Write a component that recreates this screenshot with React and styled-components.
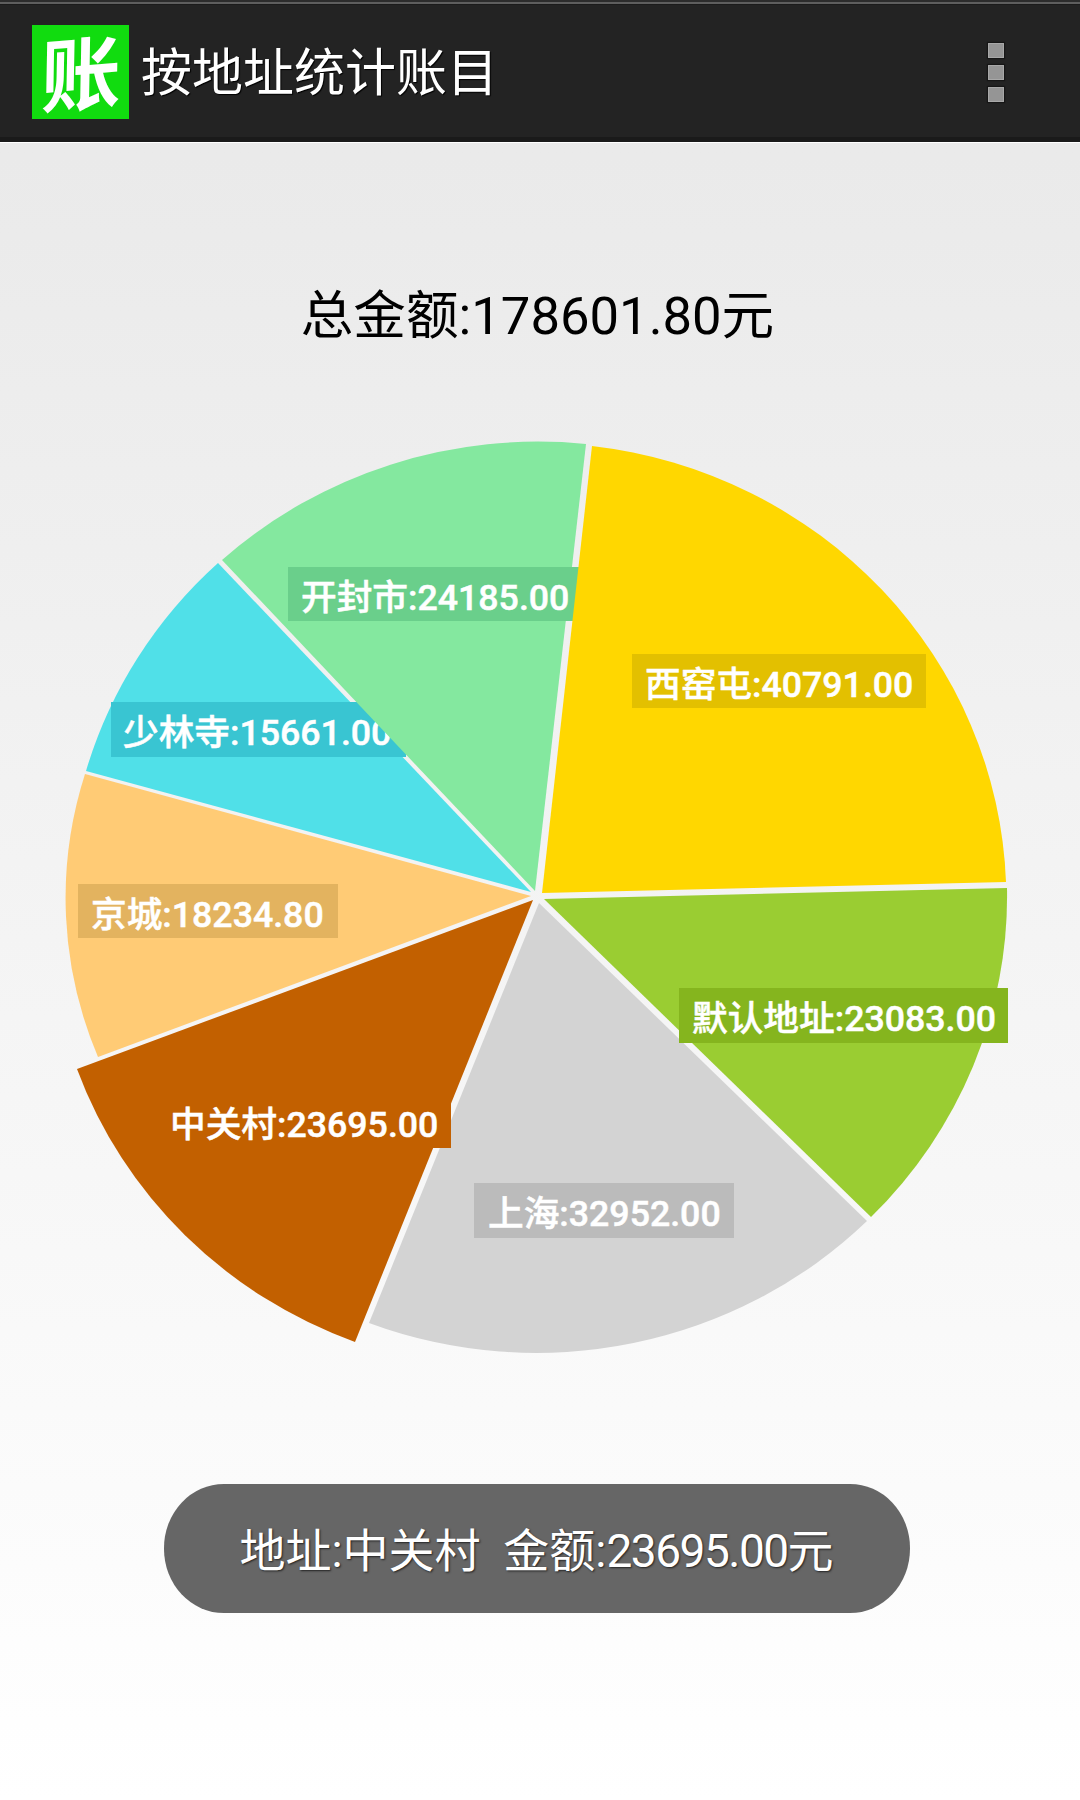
import React from "react";
import styled, { createGlobalStyle } from "styled-components";

const GlobalStyle = createGlobalStyle`
  html, body { margin: 0; padding: 0; }
  body { font-family: Roboto, "Noto Sans CJK SC", sans-serif; background: #fff; }
`;

const Page = styled.div`
  width: 1080px;
  height: 1800px;
  overflow: hidden;
  display: flex;
  flex-direction: column;
  background: linear-gradient(#e8e8e8, #ffffff);
`;

const ActionBar = styled.header`
  height: 142px;
  flex: none;
  box-sizing: content-box;
  display: flex;
  align-items: center;
  padding: 0 76px 0 32px;
  border-bottom: 1px solid #fff;
  background: linear-gradient(
    #2c2c2c 0 2px,
    #5e5e5e 2px 4px,
    #1b1b1b 4px 5px,
    #232323 5px 137px,
    #1a1a1a 137px
  );
`;

const Logo = styled.div`
  width: 97px;
  height: 94px;
  margin-top: 2px;
  flex: none;
  display: flex;
  align-items: center;
  justify-content: center;
  background: #11dc0f;
`;

const LogoGlyph = styled.span`
  color: #fff;
  font: 700 80px/1 "Noto Sans CJK SC", sans-serif;
  transform: translateY(-3px) rotate(-5deg) skewX(-6deg);
`;

const Title = styled.h1`
  flex: 1;
  margin: -4px 0 0 12px;
  color: #fff;
  font: 400 51px/1 "Noto Sans CJK SC", sans-serif;
  text-shadow: 1px 1px 1px #000;
`;

const Overflow = styled.div`
  display: flex;
  flex-direction: column;
  gap: 7px;
  margin-top: 2px;
`;

const Dot = styled.i`
  display: block;
  box-sizing: border-box;
  width: 16px;
  height: 15px;
  background: #959595;
  border: 1px solid #a8a8a8;
  box-shadow: 0 0 1px 1px #161616;
`;

const Total = styled.div`
  margin-top: 142px;
  height: 62px;
  text-align: center;
  padding-right: 5px;
  color: #000;
  font: 400 52.6px/62px Roboto, "Noto Sans CJK SC", sans-serif;
`;

const ChartFrame = styled.svg`
  display: block;
  flex: none;
  width: 1080px;
  height: 960px;
  margin-top: 73px;
`;

const LabelText = styled.text`
  fill: #fff;
  stroke: #fff;
  stroke-width: 0.5px;
  font: 500 35.7px Roboto, "Noto Sans CJK SC", sans-serif;
`;

const Toast = styled.div`
  align-self: center;
  margin-top: 104px;
  margin-left: -7px;
  padding-top: 4px;
  box-sizing: border-box;
  width: 746px;
  height: 129px;
  flex: none;
  display: flex;
  align-items: center;
  justify-content: center;
  border-radius: 60px / 64px;
  background: #666;
  color: #fff;
  font: 400 46px/1 Roboto, "Noto Sans CJK SC", sans-serif;
  white-space: pre;
  text-shadow: 1px 1px 2px #222;
`;

const Amount = styled.span`
  letter-spacing: -1.5px;
`;

// Painted in this order: each slice covers the label of the slice before it.
const slices = [
  { color: "#d3d3d3", tag: "#bbbbbb", apex: [539, 903], from: [867, 1221], to: [369, 1323],
    text: "上海:32952.00", rect: [474, 1183, 260, 55], tx: 488, ty: 1226 },
  { color: "#c26000", tag: "#c26000", apex: [533, 900], from: [355, 1342], to: [77, 1069],
    text: "中关村:23695.00", rect: [157, 1094, 294, 54], tx: 170, ty: 1137 },
  { color: "#ffcb75", tag: "#e3b35f", rx: 425, ry: 415, apex: [531, 896], from: [98, 1057], to: [85, 774],
    text: "京城:18234.80", rect: [78, 884, 260, 54], tx: 91, ty: 927 },
  { color: "#50e0e8", tag: "#39c5d2", apex: [531, 892], from: [86, 771], to: [218, 563],
    text: "少林寺:15661.00", rect: [111, 702, 295, 55], tx: 123, ty: 745 },
  { color: "#84e89f", tag: "#6acf8b", apex: [535, 891], from: [222, 560], to: [586, 444],
    text: "开封市:24185.00", rect: [288, 567, 295, 54], tx: 301, ty: 610 },
  { color: "#ffd700", tag: "#e3c000", apex: [542, 893], from: [592, 446], to: [1006, 882],
    text: "西窑屯:40791.00", rect: [632, 654, 294, 54], tx: 645, ty: 697 },
  { color: "#9acd32", tag: "#85b51e", apex: [544, 899], from: [1007, 888], to: [871, 1217],
    text: "默认地址:23083.00", rect: [679, 988, 329, 55], tx: 692, ty: 1031 },
];

const slicePath = ({ apex, from, to, rx = 470, ry = 456 }) =>
  `M${apex[0]} ${apex[1]} L${from[0]} ${from[1]} A${rx} ${ry} 0 0 1 ${to[0]} ${to[1]} Z`;

function PieChart() {
  return (
    <ChartFrame viewBox="0 420 1080 960">
      {slices.map((s) => (
        <g key={s.text}>
          <path d={slicePath(s)} fill={s.color} />
          <rect x={s.rect[0]} y={s.rect[1]} width={s.rect[2]} height={s.rect[3]} fill={s.tag} />
          <LabelText x={s.tx} y={s.ty}>{s.text}</LabelText>
        </g>
      ))}
    </ChartFrame>
  );
}

export default function App() {
  return (
    <Page>
      <GlobalStyle />
      <ActionBar>
        <Logo><LogoGlyph>账</LogoGlyph></Logo>
        <Title>按地址统计账目</Title>
        <Overflow>
          <Dot />
          <Dot />
          <Dot />
        </Overflow>
      </ActionBar>
      <Total>总金额:178601.80元</Total>
      <PieChart />
      <Toast>地址:中关村  金额:<Amount>23695.00</Amount>元</Toast>
    </Page>
  );
}
